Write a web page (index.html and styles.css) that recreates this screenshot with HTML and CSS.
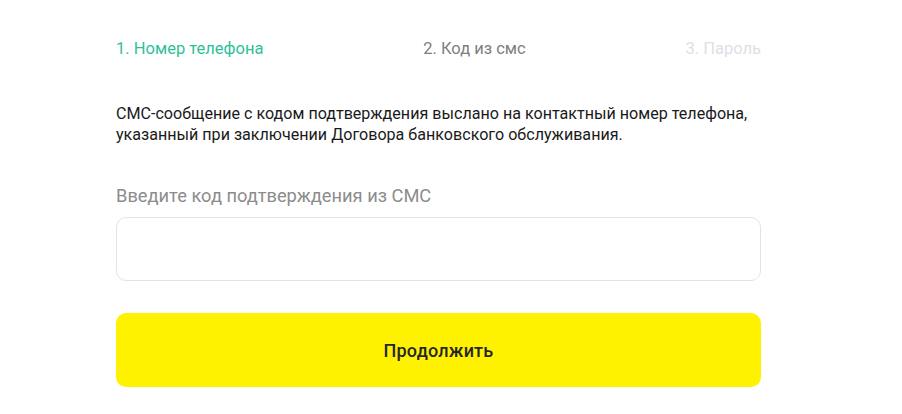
FILE: index.html
```html
<!DOCTYPE html>
<html lang="ru">
<head>
<meta charset="utf-8">
<title>Код из СМС</title>
<link rel="stylesheet" href="styles.css">
</head>
<body>
<main class="form">
  <nav class="steps">
    <span class="step step-done">1. Номер телефона</span>
    <span class="step step-current">2. Код из смс</span>
    <span class="step step-next">3. Пароль</span>
  </nav>
  <p class="info">СМС-сообщение с кодом подтверждения выслано на контактный номер телефона,<br>указанный при заключении Договора банковского обслуживания.</p>
  <label class="label" for="code">Введите код подтверждения из СМС</label>
  <input class="input" id="code" type="text">
  <button class="button" type="button">Продолжить</button>
</main>
</body>
</html>
```

FILE: styles.css
```css
html, body {
  margin: 0;
  padding: 0;
  background: #ffffff;
}

body {
  font-family: Roboto, "Noto Sans", sans-serif;
  color: #1a1a1a;
}

.form {
  width: 645px;
  margin-left: 116px;
  padding-top: 37px;
  display: flex;
  flex-direction: column;
}

.steps {
  display: flex;
  justify-content: space-between;
  font-size: 16.5px;
  line-height: 24px;
}

.step-done { color: #2fbf9a; }
.step-current { color: #808080; }
.step-next { color: #dde1e5; }

.info {
  margin: 42px 0 0;
  font-size: 16.1px;
  line-height: 21px;
  color: #1a1a1a;
}

.label {
  margin-top: 39px;
  font-size: 18.3px;
  line-height: 24px;
  color: #8c8c8c;
}

.input {
  margin-top: 9px;
  height: 64px;
  box-sizing: border-box;
  border: 1px solid #e3e3e6;
  border-radius: 10px;
  background: #fff;
  padding: 0 16px;
  font: inherit;
  font-size: 18px;
  outline: none;
}

.button {
  margin-top: 32px;
  height: 74px;
  border: none;
  border-radius: 10px;
  background: #fff200;
  color: #262626;
  font-family: inherit;
  font-size: 18px;
  font-weight: 500;
  letter-spacing: 0.2px;
  cursor: pointer;
}
```
